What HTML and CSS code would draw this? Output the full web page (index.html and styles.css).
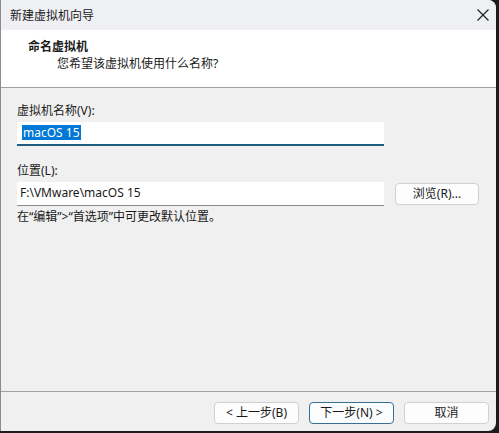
FILE: index.html
```html
<!DOCTYPE html>
<html lang="zh-CN">
<head>
<meta charset="utf-8">
<title>新建虚拟机向导</title>
<link rel="stylesheet" href="styles.css">
</head>
<body>
<div class="window">
  <div class="titlebar">
    <span class="title">新建虚拟机向导</span>
    <span class="close" aria-label="关闭">
      <svg width="12" height="12" viewBox="0 0 12 12"><path d="M0.5 0.5 L11.5 11.5 M11.5 0.5 L0.5 11.5" stroke="#1a1a1a" stroke-width="1.1" fill="none"/></svg>
    </span>
  </div>
  <div class="header">
    <div class="h-title">命名虚拟机</div>
    <div class="h-sub">您希望该虚拟机使用什么名称?</div>
  </div>
  <div class="content">
    <div class="label">虚拟机名称(V):</div>
    <div class="input focused"><span class="sel">macOS 15</span></div>
    <div class="label second">位置(L):</div>
    <div class="row">
      <div class="input path">F:\VMware\macOS 15</div>
      <button class="btn browse">浏览(R)...</button>
    </div>
    <div class="hint">在“编辑”&gt;“首选项”中可更改默认位置。</div>
  </div>
  <div class="footer">
    <button class="btn">&lt; 上一步(B)</button>
    <button class="btn default">下一步(N) &gt;</button>
    <button class="btn cancel">取消</button>
  </div>
</div>
</body>
</html>
```
FILE: styles.css
```css
* { box-sizing: border-box; }
html, body { margin: 0; padding: 0; }
body {
  width: 499px;
  height: 433px;
  background: #1c1c1c;
  font-family: "Noto Sans", "Noto Sans CJK SC", sans-serif;
  font-size: 12px;
  color: #1a1a1a;
  overflow: hidden;
}
.window {
  width: 496px;
  height: 431px;
  background: #f0f0f0;
  border-left: 1px solid #8c8c8c;
  border-radius: 0 8px 8px 0;
  display: flex;
  flex-direction: column;
  overflow: hidden;
}
.titlebar {
  height: 30px;
  flex: none;
  background: #eff0f4;
  display: flex;
  align-items: center;
  justify-content: space-between;
  padding: 0 7px 0 9px;
}
.title { line-height: 16px; margin-top: 1px; }
.close { display: flex; width: 12px; height: 12px; margin-top: -1px; }
.header {
  height: 58px;
  flex: none;
  background: #ffffff;
  border-bottom: 1px solid #a0a0a0;
  padding: 9px 0 0 27px;
}
.h-title { font-weight: bold; line-height: 16px; }
.h-sub { line-height: 16px; margin: 1px 0 0 29px; }
.content {
  flex: 1;
  padding: 15px 0 0 16px;
  display: flex;
  flex-direction: column;
}
.label { line-height: 16px; }
.label.second { margin-top: 17px; }
.input {
  width: 367px;
  height: 24px;
  margin-top: 3px;
  background: #ffffff;
  border-bottom: 1px solid #8a8a8a;
  line-height: 22px;
  padding-left: 4px;
  white-space: nowrap;
}
.input.focused { border-bottom: 2px solid #1f5f7d; padding-left: 5px; }
.sel {
  background: #0078d7;
  color: #ffffff;
  display: inline-block;
  line-height: 15px;
  margin-top: 3px;
  padding: 0 1px;
}
.path { padding-left: 3px; }
.row { display: flex; align-items: center; gap: 11px; }
.btn {
  font-family: inherit;
  font-size: 12px;
  color: #1a1a1a;
  background: #fdfdfd;
  border: 1px solid #d0d0d0;
  border-radius: 4px;
  height: 22px;
  width: 85px;
  padding: 0;
  line-height: 20px;
}
.browse { margin-top: 3px; width: 84px; }
.hint { line-height: 16px; margin-top: 3px; }
.footer {
  flex: none;
  height: 40px;
  border-top: 1px solid #a0a0a0;
  display: flex;
  justify-content: flex-end;
  gap: 10px;
  padding: 10px 7px 0 0;
}
.btn.default { border-color: #3a6f95; background: #fbfcfd; }
```
